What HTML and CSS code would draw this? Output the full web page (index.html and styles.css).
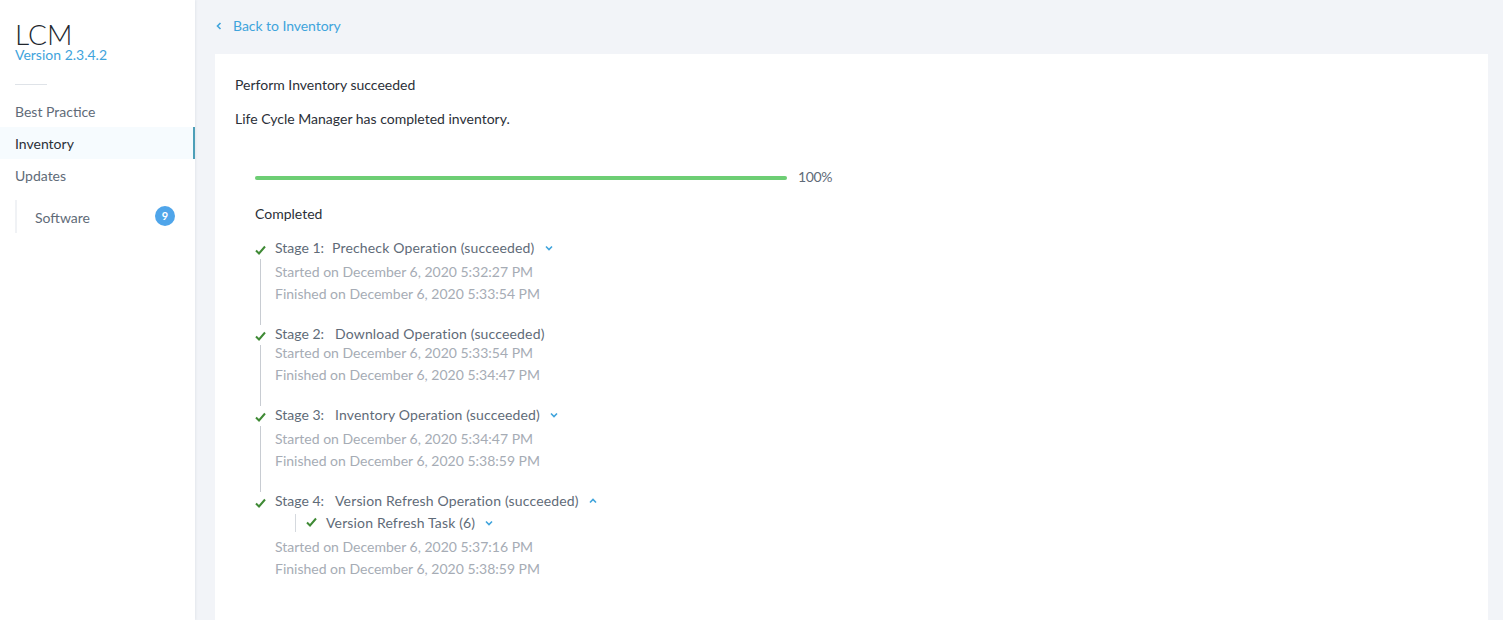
FILE: index.html
```html
<!DOCTYPE html>
<html lang="en">
<head>
<meta charset="utf-8">
<title>LCM</title>
<link rel="stylesheet" href="styles.css">
</head>
<body>
<div class="app">
  <aside class="sidebar">
    <header class="brand">
      <h1 class="brand-name">LCM</h1>
      <a class="brand-version">Version 2.3.4.2</a>
    </header>
    <hr class="brand-rule">
    <nav class="nav">
      <a class="nav-item">Best Practice</a>
      <a class="nav-item nav-item-active">Inventory</a>
      <a class="nav-item">Updates</a>
      <div class="subnav">
        <a class="subnav-item">Software <span class="badge">9</span></a>
      </div>
    </nav>
  </aside>
  <main class="main">
    <a class="back">
      <svg class="back-icon" viewBox="0 0 6 8"><path d="M4.5 1 1.5 4l3 3"/></svg>
      <span>Back to Inventory</span>
    </a>
    <section class="card">
      <p class="headline">Perform Inventory succeeded</p>
      <p class="subhead">Life Cycle Manager has completed inventory.</p>
      <div class="task">
        <div class="progress">
          <div class="progress-track"><div class="progress-fill"></div></div>
          <span class="progress-label">100%</span>
        </div>
        <p class="status">Completed</p>
        <ol class="stages">
          <li class="stage">
            <div class="rail">
              <svg class="check" viewBox="0 0 11 10"><path d="M1 5.5 4 8.5 10 1.5"/></svg>
              <span class="rail-line"></span>
            </div>
            <div class="stage-body">
              <div class="stage-title"><span class="stage-no stage-no-narrow">Stage 1:</span><span>Precheck Operation (succeeded)</span>
                <svg class="chev" viewBox="0 0 8 6"><path d="M1 1.5 4 4.5 7 1.5"/></svg></div>
              <div class="times">
                <div>Started on December 6, 2020 5:32:27 PM</div>
                <div>Finished on December 6, 2020 5:33:54 PM</div>
              </div>
            </div>
          </li>
          <li class="stage">
            <div class="rail">
              <svg class="check" viewBox="0 0 11 10"><path d="M1 5.5 4 8.5 10 1.5"/></svg>
              <span class="rail-line"></span>
            </div>
            <div class="stage-body">
              <div class="stage-title"><span class="stage-no">Stage 2:</span><span>Download Operation (succeeded)</span></div>
              <div class="times times-tight">
                <div>Started on December 6, 2020 5:33:54 PM</div>
                <div>Finished on December 6, 2020 5:34:47 PM</div>
              </div>
            </div>
          </li>
          <li class="stage">
            <div class="rail">
              <svg class="check" viewBox="0 0 11 10"><path d="M1 5.5 4 8.5 10 1.5"/></svg>
              <span class="rail-line"></span>
            </div>
            <div class="stage-body">
              <div class="stage-title"><span class="stage-no">Stage 3:</span><span>Inventory Operation (succeeded)</span>
                <svg class="chev" viewBox="0 0 8 6"><path d="M1 1.5 4 4.5 7 1.5"/></svg></div>
              <div class="times">
                <div>Started on December 6, 2020 5:34:47 PM</div>
                <div>Finished on December 6, 2020 5:38:59 PM</div>
              </div>
            </div>
          </li>
          <li class="stage">
            <div class="rail">
              <svg class="check" viewBox="0 0 11 10"><path d="M1 5.5 4 8.5 10 1.5"/></svg>
            </div>
            <div class="stage-body">
              <div class="stage-title"><span class="stage-no">Stage 4:</span><span>Version Refresh Operation (succeeded)</span>
                <svg class="chev" viewBox="0 0 8 6"><path d="M1 4.5 4 1.5 7 4.5"/></svg></div>
              <div class="subtask">
                <svg class="check" viewBox="0 0 11 10"><path d="M1 5.5 4 8.5 10 1.5"/></svg>
                <span>Version Refresh Task (6)</span>
                <svg class="chev" viewBox="0 0 8 6"><path d="M1 1.5 4 4.5 7 1.5"/></svg>
              </div>
              <div class="times times-after-task">
                <div>Started on December 6, 2020 5:37:16 PM</div>
                <div>Finished on December 6, 2020 5:38:59 PM</div>
              </div>
            </div>
          </li>
        </ol>
      </div>
    </section>
  </main>
</div>
</body>
</html>
```
FILE: styles.css
```css
* { box-sizing: border-box; }
html, body { height: 100%; }
body {
  margin: 0;
  overflow: hidden;
  font-family: "Lato", "Open Sans", sans-serif;
  font-size: 14px;
  color: #2b3038;
}
.app { display: flex; height: 620px; background: #f2f4f8; }

.sidebar {
  width: 195px;
  flex: none;
  background: #fff;
  box-shadow: 1px 0 2px rgba(200, 208, 218, 0.35);
}
.brand { padding: 20px 15px 0; }
.brand-name {
  margin: 0;
  font-size: 28px;
  font-weight: 300;
  line-height: 28px;
  color: #22272e;
}
.brand-version {
  display: block;
  font-size: 14px;
  line-height: 14px;
  color: #3fa4dc;
}
.brand-rule {
  width: 32px;
  height: 1px;
  margin: 22px 0 10px 15px;
  border: 0;
  background: #dfe3e8;
}
.nav-item {
  display: block;
  height: 32px;
  padding-left: 15px;
  line-height: 34px;
  color: #5f6b78;
}
.nav-item-active {
  color: #2b3038;
  background: #f6fbfe;
  border-right: 2px solid #4d9fb8;
}
.subnav {
  margin: 9px 0 0 15px;
  border-left: 2px solid #f0f2f5;
}
.subnav-item {
  display: flex;
  justify-content: space-between;
  align-items: center;
  height: 33px;
  padding: 2px 20px 0 18px;
  color: #5f6b78;
}
.badge {
  width: 20px;
  height: 20px;
  margin-top: -3px;
  border-radius: 50%;
  background: #4fa5ea;
  color: #fff;
  font-size: 11px;
  font-weight: 700;
  line-height: 20px;
  text-align: center;
}

.main { flex: 1; display: flex; flex-direction: column; padding: 0 15px 0 20px; min-width: 0; }
.back {
  display: flex;
  align-items: center;
  gap: 11px;
  height: 54px;
  padding-left: 1px;
  letter-spacing: -0.05px;
  color: #3fa4dc;
}
.back-icon {
  width: 6px;
  height: 8px;
  margin-top: -2px;
  fill: none;
  stroke: #3fa4dc;
  stroke-width: 1.6;
}
.back span { margin-top: -3px; }
.card { flex: 1; padding: 20px; background: #fff; }
.headline { margin: 0; line-height: 22px; }
.subhead { margin: 12px 0 0; line-height: 22px; }
.task { padding: 36px 0 0 20px; }
.progress { display: flex; align-items: center; gap: 11px; height: 22px; }
.progress-track { width: 532px; height: 4px; margin-top: 2px; border-radius: 2px; background: #e6e9ee; }
.progress-fill { height: 100%; border-radius: 2px; background: #6dce74; }
.progress-label { margin-bottom: 2px; letter-spacing: -0.4px; color: #5f6b78; }
.status { margin: 15px 0 12px; line-height: 22px; }

.stages { margin: 0; padding: 0; list-style: none; }
.stage { display: flex; }
.rail { display: flex; flex-direction: column; width: 20px; flex: none; }
.rail .check { margin: 8px 0 0; }
.check {
  width: 11px;
  height: 10px;
  flex: none;
  fill: none;
  stroke: #3f8a35;
  stroke-width: 2;
}
.rail-line {
  flex: 1;
  width: 1px;
  margin: 4px 0 -2px 5px;
  background: #c8ccd2;
}
.stage-body { flex: 1; padding-bottom: 18px; }
.stage-title {
  display: flex;
  align-items: center;
  height: 22px;
  padding-bottom: 2px;
  letter-spacing: 0.16px;
  color: #5f6b78;
}
.stage-no { margin-right: 11px; letter-spacing: 0; }
.stage-no-narrow { margin-right: 8px; }
.chev {
  width: 8px;
  height: 6px;
  margin: 2px 0 0 10px;
  fill: none;
  stroke: #3fa4dc;
  stroke-width: 1.6;
}
.times { margin-top: 2px; line-height: 22px; color: #a6acb5; }
.times-tight { margin-top: -3px; }
.times-after-task { margin-top: 4px; }
.subtask {
  display: flex;
  align-items: center;
  height: 18px;
  margin: 2px 0 0 20px;
  padding: 0 0 2px 10px;
  border-left: 1px solid #d5d9de;
  letter-spacing: 0.16px;
  color: #5f6b78;
}
.subtask span { margin-left: 9px; }
```
